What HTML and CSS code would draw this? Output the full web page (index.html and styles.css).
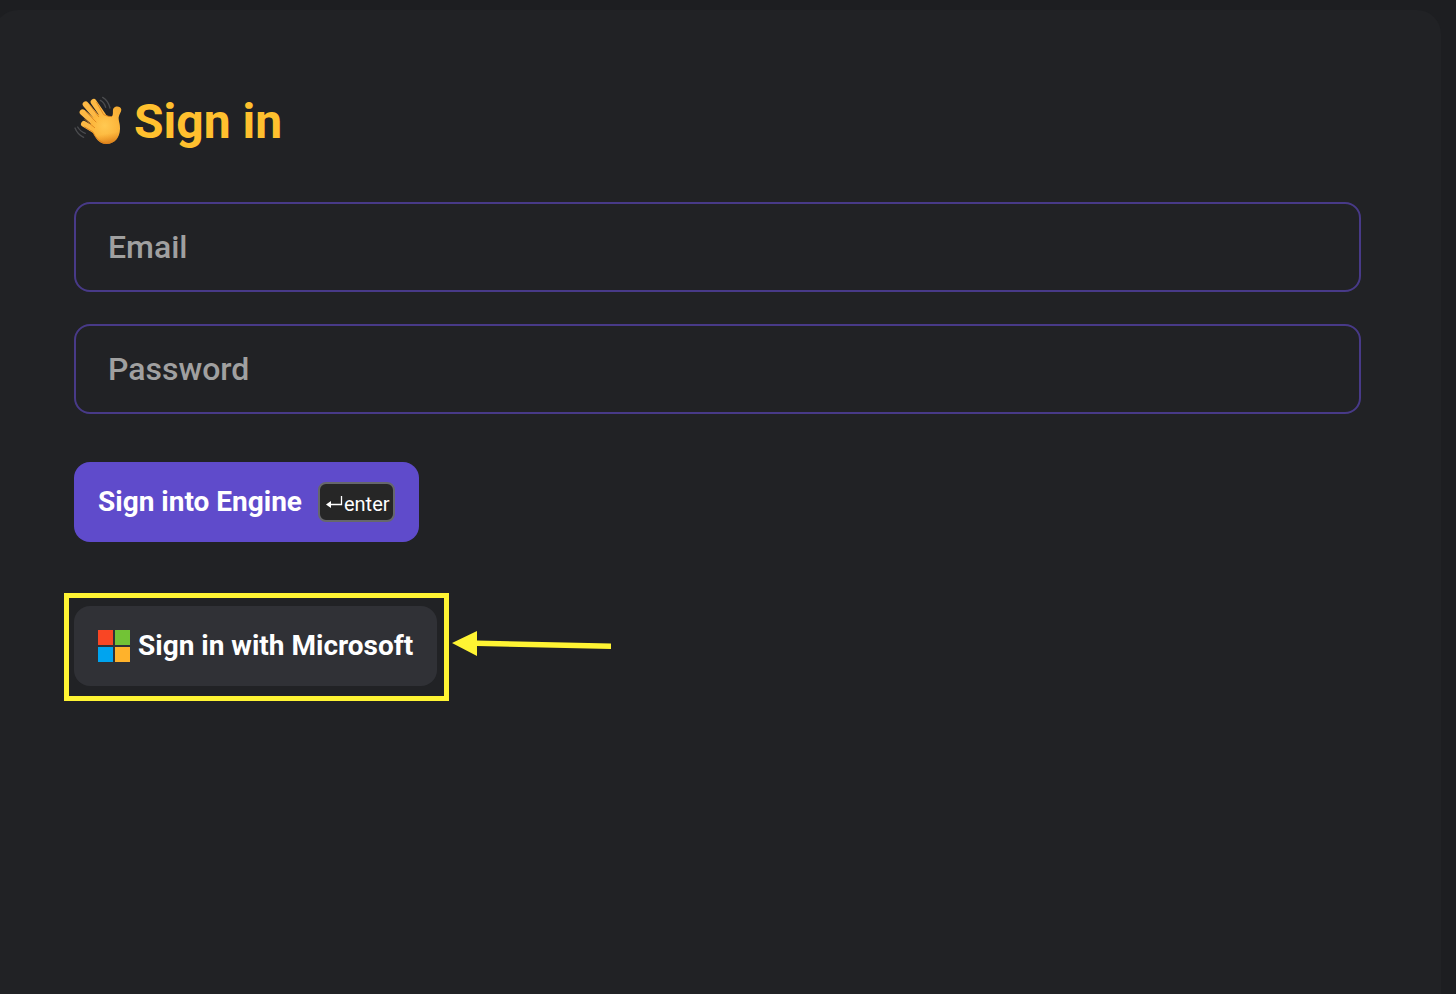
FILE: index.html
```html
<!DOCTYPE html>
<html lang="en">
<head>
<meta charset="utf-8">
<meta name="viewport" content="width=device-width, initial-scale=1">
<title>Sign in</title>
<link rel="stylesheet" href="styles.css">
</head>
<body>
<main class="panel">
  <h1 class="title">
    <svg class="wave" viewBox="30 32 150 150" aria-hidden="true">
      <defs>
        <radialGradient id="skin" gradientUnits="userSpaceOnUse" cx="122" cy="118" r="72">
          <stop offset="0" stop-color="#ffc952"/>
          <stop offset=".5" stop-color="#fdb83e"/>
          <stop offset="1" stop-color="#f4a92f"/>
        </radialGradient>
        <linearGradient id="shade" gradientUnits="userSpaceOnUse" x1="120" y1="110" x2="132" y2="175">
          <stop offset=".5" stop-color="#e07a10" stop-opacity="0"/>
          <stop offset="1" stop-color="#c9620c" stop-opacity=".7"/>
        </linearGradient>
      </defs>
      <g class="wave-fingers">
        <path d="M89 47 L118 89"/>
        <path d="M65 54 L104 100"/>
        <path d="M56 78 L96 114"/>
        <path d="M60 113 L92 132"/>
      </g>
      <path fill="url(#skin)" d="M82 104 L96 82 Q112 88 126 86 Q140 94 145 88 C149 80 144 69 150 64 C157 57 171 60 172 70 C172 77 165 83 164 93 C163 104 169 112 168 128 C167 154 152 173 127 173 C106 173 94 155 84 134 C78 124 78 112 82 104Z"/>
      <path fill="url(#shade)" d="M84 134 C100 120 145 90 164 93 C163 104 169 112 168 128 C167 154 152 173 127 173 C106 173 94 155 84 134Z"/>
      <g class="wave-creases">
        <path d="M79 58 L104 91"/>
        <path d="M66 76 L96 107"/>
        <path d="M62 99 L92 124"/>
        <path d="M98 48 L119 85 Q132 91 142 91"/>
        <path d="M62 122 L86 136 Q100 166 125 172"/>
      </g>
      <g class="wave-motion">
        <path d="M109 42 Q121 48 125 63"/>
        <path d="M116 33 Q133 43 138 65"/>
        <path d="M41 122 Q49 136 64 141"/>
        <path d="M33 125 Q41 145 59 153"/>
      </g>
    </svg>
    <span>Sign in</span>
  </h1>
  <form class="form">
    <input class="field" type="email" placeholder="Email" aria-label="Email">
    <input class="field" type="password" placeholder="Password" aria-label="Password">
    <button class="button button-primary" type="submit">
      Sign into Engine
      <kbd class="key"><svg class="key-icon" viewBox="0 0 18 16" aria-hidden="true"><path d="M15.5 0V8.5H3" fill="none" stroke="currentColor" stroke-width="1.3"/><path d="M0 8.5L5 5V12Z" fill="currentColor"/></svg>enter</kbd>
    </button>
    <div class="callout">
      <button class="button button-microsoft" type="button">
        <svg class="microsoft" viewBox="0 0 32 32" aria-hidden="true"><path fill="#f94624" d="M0 0h15v15H0z"/><path fill="#72c336" d="M17 0h15v15H17z"/><path fill="#00a4ef" d="M0 17h15v15H0z"/><path fill="#ffb22b" d="M17 17h15v15H17z"/></svg>
        Sign in with Microsoft
      </button>
      <svg class="arrow" viewBox="0 0 160 26" aria-hidden="true"><path fill="#fff433" d="M0 12L25 0V9.5L159 12.5V18L25 15V25Z"/></svg>
    </div>
  </form>
</main>
</body>
</html>
```
FILE: styles.css
```css
* {
  box-sizing: border-box;
}

body {
  margin: 0;
  min-height: 100vh;
  display: flex;
  padding: 10px 15px 0 0;
  background: #1d1e21;
  color: #fff;
  font-family: Roboto, "Liberation Sans", sans-serif;
}

.panel {
  flex: 1;
  margin-left: -6px;
  padding: 80px;
  border-radius: 24px 24px 0 0;
  background: #212225;
}

.title {
  display: flex;
  align-items: center;
  gap: 10px;
  margin: 0 0 48px;
  color: #ffc02e;
  font-size: 48px;
  font-weight: 700;
  line-height: 64px;
}

.wave {
  width: 50px;
  height: 50px;
  overflow: visible;
}

.wave-fingers {
  fill: none;
  stroke: #fdb945;
  stroke-width: 18;
  stroke-linecap: round;
}

.wave-creases {
  fill: none;
  stroke: #d97c18;
  stroke-width: 3;
  stroke-linecap: round;
  opacity: 0.75;
}

.wave-motion {
  fill: none;
  stroke: #4b4c4f;
  stroke-width: 4;
  stroke-linecap: round;
}

.form {
  display: flex;
  flex-direction: column;
  align-items: flex-start;
}

.field {
  width: 100%;
  height: 90px;
  margin-bottom: 32px;
  padding: 0 32px;
  border: 2px solid #483a88;
  border-radius: 16px;
  background: transparent;
  color: #fff;
  font: 500 32px/40px Roboto, "Liberation Sans", sans-serif;
}

.field::placeholder {
  color: #a0a0a0;
  opacity: 1;
}

.button {
  display: flex;
  align-items: center;
  height: 80px;
  padding: 0 24px;
  border: 0;
  border-radius: 16px;
  color: #fff;
  font: 700 28px/32px Roboto, "Liberation Sans", sans-serif;
  white-space: nowrap;
}

.button-primary {
  gap: 16px;
  margin: 16px 0 64px;
  background: #5f4bcb;
}

.key {
  display: flex;
  align-items: center;
  height: 40px;
  padding: 4px 3px 0 6px;
  border: 2px solid #66676b;
  border-radius: 8px;
  background: #262626;
  font: 400 20px/24px Roboto, "Liberation Sans", sans-serif;
}

.key-icon {
  width: 18px;
  height: 16px;
}

.callout {
  position: relative;
}

.callout::before {
  content: "";
  position: absolute;
  inset: -13px -12px -15px -10px;
  border: 5px solid #fff433;
  pointer-events: none;
}

.button-microsoft {
  gap: 8px;
  background: #303136;
}

.microsoft {
  width: 32px;
  height: 32px;
}

.arrow {
  position: absolute;
  top: 25px;
  left: calc(100% + 15px);
  width: 160px;
  height: 26px;
}
```
